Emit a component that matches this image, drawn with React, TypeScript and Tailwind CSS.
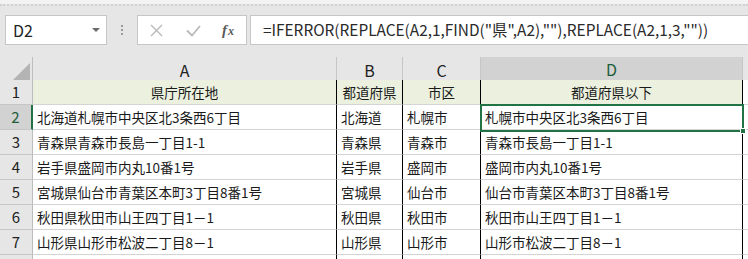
const FONT = { fontFamily: '"Noto Sans CJK JP", "Noto Sans", sans-serif' };

const rows: [string, string, string, string][] = [
  ["北海道札幌市中央区北3条西6丁目", "北海道", "札幌市", "札幌市中央区北3条西6丁目"],
  ["青森県青森市長島一丁目1-1", "青森県", "青森市", "青森市長島一丁目1-1"],
  ["岩手県盛岡市内丸10番1号", "岩手県", "盛岡市", "盛岡市内丸10番1号"],
  ["宮城県仙台市青葉区本町3丁目8番1号", "宮城県", "仙台市", "仙台市青葉区本町3丁目8番1号"],
  ["秋田県秋田市山王四丁目1－1", "秋田県", "秋田市", "秋田市山王四丁目1－1"],
  ["山形県山形市松波二丁目8－1", "山形県", "山形市", "山形市松波二丁目8－1"],
];

const COLS = "grid grid-cols-[33px_304px_66px_78px_262px_1fr]";

function FormulaBar() {
  return (
    <div className="mt-[9px] flex h-[30px] items-stretch pl-[5px]">
      <div className="flex w-[102px] items-center justify-between border border-[#c6c6c6] bg-white pl-[7px] pr-[6px]">
        <span className="text-[16px] text-[#222]">D2</span>
        <span className="h-0 w-0 border-x-[4px] border-t-[4px] border-x-transparent border-t-[#6a6a6a]" />
      </div>
      <div className="flex w-[30px] flex-col items-center justify-center gap-[2px]">
        <span className="h-[2px] w-[2px] bg-[#9a9a9a]" />
        <span className="h-[2px] w-[2px] bg-[#9a9a9a]" />
        <span className="h-[2px] w-[2px] bg-[#9a9a9a]" />
      </div>
      <div className="flex w-[110px] items-center border border-[#c6c6c6] bg-white">
        <svg width="108" height="28" viewBox="0 0 108 28">
          <path d="M13 9 L24 20 M24 9 L13 20" stroke="#b9b9b9" strokeWidth="1.4" fill="none" />
          <path d="M49 14.5 L54 19.5 L62 10" stroke="#b9b9b9" strokeWidth="1.8" fill="none" />
          <text x="84" y="19" fontFamily='"Liberation Serif", serif' fontStyle="italic" fontWeight="bold" fontSize="15" fill="#5a5a5a">
            f
          </text>
          <text x="90" y="19" fontFamily='"Liberation Serif", serif' fontStyle="italic" fontWeight="bold" fontSize="12" fill="#5a5a5a">
            x
          </text>
        </svg>
      </div>
      <div className="ml-[3px] flex flex-1 items-center border border-[#c6c6c6] border-r-0 bg-white pl-[12px]">
        <span className="whitespace-nowrap text-[15.4px] text-[#2a2a2a]">
          =IFERROR(REPLACE(A2,1,FIND("県",A2),""),REPLACE(A2,1,3,""))
        </span>
      </div>
    </div>
  );
}

function ColumnHeader() {
  const letters = ["A", "B", "C"];
  return (
    <div className={`${COLS} mt-[12px] h-[23px] text-[16px] text-[#222]`}>
      <div className="flex items-end justify-end border-r border-b border-[#bdbdbd] bg-[#e6e6e6] pr-[2px] pb-[2px]">
        <svg width="17" height="17" viewBox="0 0 17 17">
          <path d="M17 0 L17 17 L0 17 Z" fill="#b4b4b4" />
        </svg>
      </div>
      {letters.map((l) => (
        <div key={l} className="flex items-center justify-center border-r border-b border-[#c6c6c6] border-b-[#bdbdbd] bg-[#e6e6e6]">
          {l}
        </div>
      ))}
      <div className="flex items-center justify-center border-r border-[#c6c6c6] border-b-2 border-b-[#217346] bg-[#d2d2d2] text-[#1e5d3a]">
        D
      </div>
      <div className="border-b border-[#bdbdbd] bg-[#e6e6e6]" />
    </div>
  );
}

function RowHead({ n, selected }: { n?: number; selected?: boolean }) {
  return (
    <div
      className={
        selected
          ? "flex items-center justify-center border-b border-[#c6c6c6] border-r-2 border-r-[#217346] bg-[#d2d2d2] text-[15px] text-[#1e5d3a]"
          : "flex items-center justify-center border-b border-[#c6c6c6] border-r border-r-[#bdbdbd] bg-[#e6e6e6] text-[15px] text-[#222]"
      }
    >
      {n}
    </div>
  );
}

function Cell({ children, center, bg }: { children?: string; center?: boolean; bg?: string }) {
  return (
    <div
      className={`flex items-center overflow-hidden whitespace-nowrap border-r border-r-black border-b border-b-[#d4d4d4] px-[4px] text-[13.5px] text-[#1a1a1a] ${
        center ? "justify-center" : ""
      } ${bg ?? "bg-white"}`}
    >
      {children}
    </div>
  );
}

export default function App() {
  return (
    <div className="relative h-[259px] w-[748px] overflow-hidden bg-[#e6e6e6]" style={FONT}>
      <div className="h-[4px] bg-[#f3f3f3]" />
      <div className="h-[2px] border-t-2 border-dotted border-[#d0d0d0]" />
      <FormulaBar />
      <ColumnHeader />

      <div className={`${COLS} h-[25px]`}>
        <RowHead n={1} />
        <Cell center bg="bg-[#ebf1de]">県庁所在地</Cell>
        <Cell center bg="bg-[#ebf1de]">都道府県</Cell>
        <Cell center bg="bg-[#ebf1de]">市区</Cell>
        <Cell center bg="bg-[#ebf1de]">都道府県以下</Cell>
        <div className="border-b border-[#d4d4d4] bg-white" />
      </div>

      {rows.map((r, i) => (
        <div key={i} className={`${COLS} h-[25px]`}>
          <RowHead n={i + 2} selected={i === 0} />
          <Cell>{r[0]}</Cell>
          <Cell>{r[1]}</Cell>
          <Cell>{r[2]}</Cell>
          <Cell>{r[3]}</Cell>
          <div className="border-b border-[#d4d4d4] bg-white" />
        </div>
      ))}

      <div className={`${COLS} h-[25px]`}>
        <RowHead />
        <Cell />
        <Cell />
        <Cell />
        <Cell />
        <div className="bg-white" />
      </div>

      {/* active cell D2 */}
      <div className="pointer-events-none absolute left-[480px] top-[104px] h-[28px] w-[264px] border-2 border-[#217346]" />
      <div className="absolute left-[740px] top-[128px] h-[6px] w-[6px] border border-white bg-[#217346]" />
    </div>
  );
}
